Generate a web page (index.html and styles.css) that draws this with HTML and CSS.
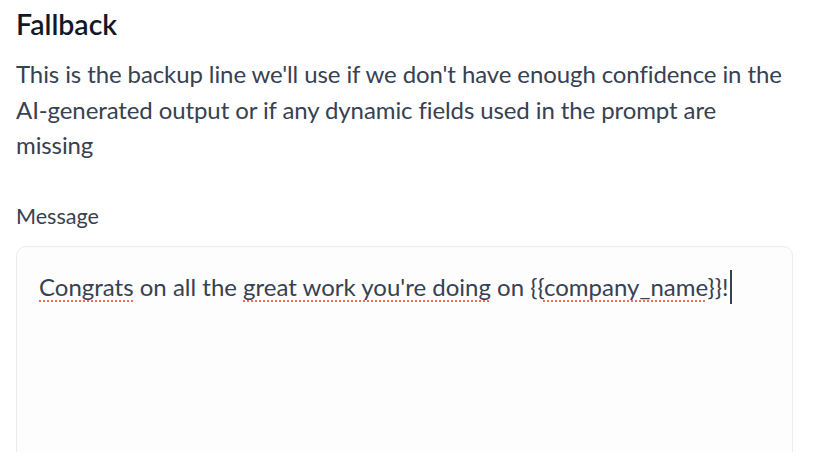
FILE: index.html
```html
<!DOCTYPE html>
<html>
<head>
<meta charset="utf-8">
<link rel="stylesheet" href="styles.css">
</head>
<body>
<section class="panel">
  <h2 class="title">Fallback</h2>
  <p class="desc">This is the backup line we'll use if we don't have enough confidence in the AI-generated output or if any dynamic fields used in the prompt are missing</p>
  <label class="label">Message</label>
  <div class="editor"><span class="spell">Congrats</span> on all the <span class="spell">great work you're doing</span> on {{<span class="spell">company_name</span>}}!<span class="caret"></span></div>
</section>
</body>
</html>
```
FILE: styles.css
```css
html, body { margin: 0; padding: 0; background: #fff; height: 452px; overflow: hidden; }
body { font-family: Lato, "Liberation Sans", sans-serif; }
.panel { padding: 6px 20px 0 16px; }
.title { margin: 0; font-size: 28.5px; font-weight: 600; color: #111827; line-height: 36px; }
.desc { margin: 14px 0 0; font-size: 24px; line-height: 35.5px; color: #374151; max-width: 772px; letter-spacing: -0.1px; }
.label { display: block; margin-top: 38px; font-size: 21.6px; line-height: 30px; color: #374151; }
.editor { margin-top: 15px; height: 260px; border: 1px solid #ececec; border-radius: 10px; background: #fdfdfd; padding: 23px 22px; font-size: 24px; line-height: 32px; color: #374151; width: 777px; box-sizing: border-box; }
.spell { text-decoration: underline dotted #f06a5e; text-decoration-thickness: 2px; text-underline-offset: 5px; }
.caret { display: inline-block; width: 2px; height: 34px; background: #374151; vertical-align: -8px; margin-left: 2px; }
```
